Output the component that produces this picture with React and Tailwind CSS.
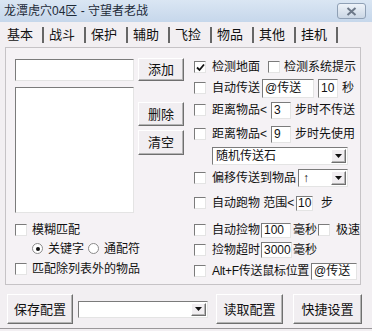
import React from "react";

const sunken = "bg-white border border-t-[#7b7b7b] border-l-[#7b7b7b] border-r-[#e4e4e4] border-b-[#e4e4e4]";
const raised = "bg-[#f1eef1] border border-t-white border-l-white border-r-[#6f6f6f] border-b-[#6f6f6f] shadow-[inset_-1px_-1px_0_#b4b4b4]";

const Check = ({ checked }) => (
  <span className={`w-[12px] h-[12px] shrink-0 flex items-center justify-center ${sunken}`}>
    {checked && (
      <svg width="9" height="9" viewBox="0 0 9 9">
        <path d="M1 4.5 L3.5 7 L8 1.5" stroke="#111" strokeWidth="1.8" fill="none" />
      </svg>
    )}
  </span>
);

const Radio = ({ on }) => (
  <span className="w-[11px] h-[11px] shrink-0 rounded-full bg-white border border-[#8a8a8a] flex items-center justify-center">
    {on && <span className="w-[4px] h-[4px] rounded-full bg-[#111]" />}
  </span>
);

const Arrow = () => (
  <span className={`ml-auto w-[15px] h-full flex items-center justify-center ${raised}`}>
    <svg width="7" height="4" viewBox="0 0 7 4">
      <path d="M0 0 H7 L3.5 4 Z" fill="#111" />
    </svg>
  </span>
);

const Tab = ({ label }) => (
  <>
    <span className="w-[35px] shrink-0">{label}</span>
    <span className="w-[2px] h-[16px] bg-[#666] shrink-0 mr-[5px]" />
  </>
);

export default function App() {
  return (
    <div className="w-[372px] h-[331px] overflow-hidden bg-[#f2eff2] text-[#111] text-[12px] leading-none font-['Liberation_Sans','Noto_Sans_CJK_SC',sans-serif]">
      {/* title bar */}
      <div className="h-[22px] flex items-center pl-[4px] pr-[6px] bg-linear-to-b from-[#dae6f3] to-[#c6d7eb]">
        <span className="text-[12px] text-[#1d2a38]">龙潭虎穴04区 - 守望者老战</span>
        <span className="ml-auto w-[29px] h-[16px] rounded-[3px] border border-[#8fa0b5] bg-linear-to-b from-[#eef3f9] to-[#cbd7e5] flex items-center justify-center">
          <svg width="11" height="9" viewBox="0 0 11 9">
            <path d="M1.5 1 L9.5 8 M9.5 1 L1.5 8" stroke="#6c7888" strokeWidth="2" />
          </svg>
        </span>
      </div>

      {/* tabs */}
      <div className="h-[25px] flex items-center pl-[7px] text-[13px]">
        {["基本", "战斗", "保护", "辅助", "飞捡", "物品", "其他", "挂机"].map((t) => (
          <Tab key={t} label={t} />
        ))}
      </div>

      {/* panel */}
      <div className="ml-[5px] w-[356px] h-[238px] border border-[#c6c3c6] bg-[#f5f2f5] flex">
        {/* left column */}
        <div className="w-[188px] shrink-0 pl-[9px] pt-[10px] flex flex-col">
          <div className="flex items-start">
            <div className={`w-[119px] h-[22px] mt-[1px] ${sunken}`} />
            <button className={`ml-[4px] w-[46px] h-[23px] text-[13px] ${raised}`}>添加</button>
          </div>
          <div className="flex mt-[6px]">
            <div className={`w-[119px] h-[126px] ${sunken}`} />
            <div className="ml-[4px] pt-[15px] flex flex-col">
              <button className={`w-[46px] h-[24px] text-[13px] ${raised}`}>删除</button>
              <button className={`mt-[4px] w-[46px] h-[25px] text-[13px] ${raised}`}>清空</button>
            </div>
          </div>
          <div className="mt-[10px] h-[13px] flex items-center">
            <Check />
            <span className="ml-[5px]">模糊匹配</span>
          </div>
          <div className="mt-[6px] h-[13px] pl-[17px] flex items-center">
            <Radio on />
            <span className="ml-[5px] w-[36px]">关键字</span>
            <span className="ml-[4px]"><Radio /></span>
            <span className="ml-[5px]">通配符</span>
          </div>
          <div className="mt-[7px] h-[13px] flex items-center">
            <Check />
            <span className="ml-[5px]">匹配除列表外的物品</span>
          </div>
        </div>

        {/* right column */}
        <div className="flex-1 pt-[9px] flex flex-col whitespace-nowrap">
          <div className="h-[20px] flex items-center">
            <Check checked />
            <span className="ml-[6px] w-[50px]">检测地面</span>
            <span className="ml-[6px]"><Check /></span>
            <span className="ml-[4px]">检测系统提示</span>
          </div>
          <div className="mt-[1px] h-[20px] flex items-center">
            <Check />
            <span className="ml-[6px] w-[49px]">自动传送</span>
            <div className={`ml-[1px] w-[52px] h-[19px] pl-[2px] flex items-center ${sunken}`}>@传送</div>
            <div className={`ml-[4px] w-[20px] h-[19px] pl-[2px] flex items-center ${sunken}`}>10</div>
            <span className="ml-[4px]">秒</span>
          </div>
          <div className="mt-[2px] h-[20px] flex items-center">
            <Check />
            <span className="ml-[6px] w-[59px]">距离物品&lt;</span>
            <div className={`w-[20px] h-[17px] pl-[2px] flex items-center ${sunken}`}>3</div>
            <span className="ml-[4px]">步时不传送</span>
          </div>
          <div className="mt-[4px] h-[20px] flex items-center">
            <Check />
            <span className="ml-[6px] w-[59px]">距离物品&lt;</span>
            <div className={`w-[20px] h-[17px] pl-[2px] flex items-center ${sunken}`}>9</div>
            <span className="ml-[4px]">步时先使用</span>
          </div>
          <div className="mt-[2px] h-[20px] flex items-center">
            <div className={`ml-[18px] w-[136px] h-[18px] pl-[2px] flex items-center p-[1px] ${sunken}`}>
              <span className="pl-[1px]">随机传送石</span>
              <Arrow />
            </div>
          </div>
          <div className="mt-[2px] h-[20px] flex items-center">
            <Check />
            <span className="ml-[6px] w-[86px]">偏移传送到物品</span>
            <div className={`w-[50px] h-[18px] flex items-center p-[1px] ${sunken}`}>
              <span className="pl-[3px]">↑</span>
              <Arrow />
            </div>
          </div>
          <div className="mt-[5px] h-[20px] flex items-center">
            <Check />
            <span className="ml-[6px] w-[84px]">自动跑物 范围&lt;</span>
            <div className={`w-[17px] h-[15px] pl-[1px] flex items-center ${sunken}`}>10</div>
            <span className="ml-[8px]">步</span>
          </div>
          <div className="mt-[7px] h-[20px] flex items-center">
            <Check />
            <span className="ml-[6px] w-[49px]">自动捡物</span>
            <div className={`w-[30px] h-[15px] pl-[2px] flex items-center ${sunken}`}>100</div>
            <span className="ml-[2px] w-[25px]">毫秒</span>
            <Check />
            <span className="ml-[6px]">极速</span>
          </div>
          <div className="h-[20px] flex items-center">
            <Check />
            <span className="ml-[6px] w-[49px]">捡物超时</span>
            <div className={`w-[31px] h-[16px] pl-[2px] flex items-center ${sunken}`}>3000</div>
            <span className="ml-[1px]">毫秒</span>
          </div>
          <div className="mt-[1px] h-[20px] flex items-center">
            <Check />
            <span className="ml-[6px] w-[99px] tracking-[-0.3px]">Alt+F传送鼠标位置</span>
            <div className={`w-[46px] h-[17px] pl-[2px] flex items-center ${sunken}`}>@传送</div>
          </div>
        </div>
      </div>

      {/* bottom buttons */}
      <div className="mt-[9px] h-[30px] pl-[7px] flex items-center text-[13px]">
        <button className={`w-[66px] h-[30px] ${raised}`}>保存配置</button>
        <div className={`ml-[5px] w-[130px] h-[17px] flex p-[1px] ${sunken}`}>
          <Arrow />
        </div>
        <button className={`ml-[8px] w-[67px] h-[30px] ${raised}`}>读取配置</button>
        <button className={`ml-[10px] w-[69px] h-[30px] ${raised}`}>快捷设置</button>
      </div>
      <div className="mt-[4px] h-[1px] bg-[#9a979a]" />
    </div>
  );
}
